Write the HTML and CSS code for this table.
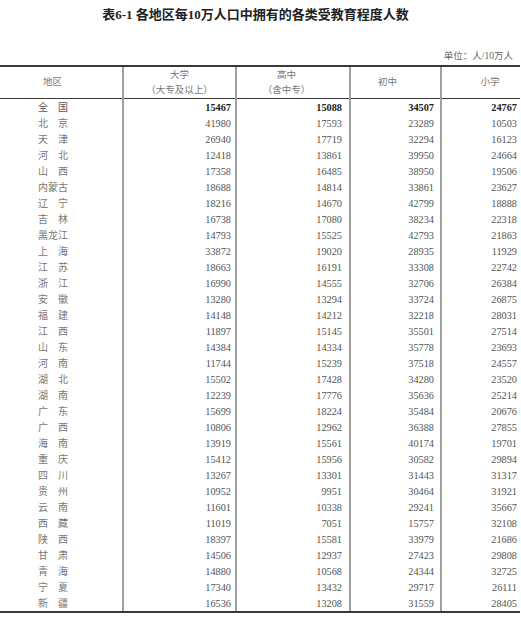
FILE: index.html
```html
<!DOCTYPE html>
<html lang="zh-CN">
<head>
<meta charset="utf-8">
<title>表6-1 各地区每10万人口中拥有的各类受教育程度人数</title>
<link rel="stylesheet" href="styles.css">
</head>
<body>
<div class="page">
  <h1 class="title">表6-1 各地区每10万人口中拥有的各类受教育程度人数</h1>
  <div class="unit">单位：人/10万人</div>
  <table class="stats">
    <colgroup>
      <col class="c0"><col class="c1"><col class="c2"><col class="c3"><col class="c4">
    </colgroup>
    <thead>
      <tr>
        <th class="h0">地区</th>
        <th class="h1">大学<br>（大专及以上）</th>
        <th class="h2">高中<br>（含中专）</th>
        <th class="h3">初中</th>
        <th class="h4">小学</th>
      </tr>
    </thead>
    <tbody id="rows">
      <tr class="total"><td class="name"><span>全国</span></td><td>15467</td><td>15088</td><td>34507</td><td>24767</td></tr>
      <tr><td class="name"><span>北京</span></td><td>41980</td><td>17593</td><td>23289</td><td>10503</td></tr>
      <tr><td class="name"><span>天津</span></td><td>26940</td><td>17719</td><td>32294</td><td>16123</td></tr>
      <tr><td class="name"><span>河北</span></td><td>12418</td><td>13861</td><td>39950</td><td>24664</td></tr>
      <tr><td class="name"><span>山西</span></td><td>17358</td><td>16485</td><td>38950</td><td>19506</td></tr>
      <tr><td class="name"><span>内蒙古</span></td><td>18688</td><td>14814</td><td>33861</td><td>23627</td></tr>
      <tr><td class="name"><span>辽宁</span></td><td>18216</td><td>14670</td><td>42799</td><td>18888</td></tr>
      <tr><td class="name"><span>吉林</span></td><td>16738</td><td>17080</td><td>38234</td><td>22318</td></tr>
      <tr><td class="name"><span>黑龙江</span></td><td>14793</td><td>15525</td><td>42793</td><td>21863</td></tr>
      <tr><td class="name"><span>上海</span></td><td>33872</td><td>19020</td><td>28935</td><td>11929</td></tr>
      <tr><td class="name"><span>江苏</span></td><td>18663</td><td>16191</td><td>33308</td><td>22742</td></tr>
      <tr><td class="name"><span>浙江</span></td><td>16990</td><td>14555</td><td>32706</td><td>26384</td></tr>
      <tr><td class="name"><span>安徽</span></td><td>13280</td><td>13294</td><td>33724</td><td>26875</td></tr>
      <tr><td class="name"><span>福建</span></td><td>14148</td><td>14212</td><td>32218</td><td>28031</td></tr>
      <tr><td class="name"><span>江西</span></td><td>11897</td><td>15145</td><td>35501</td><td>27514</td></tr>
      <tr><td class="name"><span>山东</span></td><td>14384</td><td>14334</td><td>35778</td><td>23693</td></tr>
      <tr><td class="name"><span>河南</span></td><td>11744</td><td>15239</td><td>37518</td><td>24557</td></tr>
      <tr><td class="name"><span>湖北</span></td><td>15502</td><td>17428</td><td>34280</td><td>23520</td></tr>
      <tr><td class="name"><span>湖南</span></td><td>12239</td><td>17776</td><td>35636</td><td>25214</td></tr>
      <tr><td class="name"><span>广东</span></td><td>15699</td><td>18224</td><td>35484</td><td>20676</td></tr>
      <tr><td class="name"><span>广西</span></td><td>10806</td><td>12962</td><td>36388</td><td>27855</td></tr>
      <tr><td class="name"><span>海南</span></td><td>13919</td><td>15561</td><td>40174</td><td>19701</td></tr>
      <tr><td class="name"><span>重庆</span></td><td>15412</td><td>15956</td><td>30582</td><td>29894</td></tr>
      <tr><td class="name"><span>四川</span></td><td>13267</td><td>13301</td><td>31443</td><td>31317</td></tr>
      <tr><td class="name"><span>贵州</span></td><td>10952</td><td>9951</td><td>30464</td><td>31921</td></tr>
      <tr><td class="name"><span>云南</span></td><td>11601</td><td>10338</td><td>29241</td><td>35667</td></tr>
      <tr><td class="name"><span>西藏</span></td><td>11019</td><td>7051</td><td>15757</td><td>32108</td></tr>
      <tr><td class="name"><span>陕西</span></td><td>18397</td><td>15581</td><td>33979</td><td>21686</td></tr>
      <tr><td class="name"><span>甘肃</span></td><td>14506</td><td>12937</td><td>27423</td><td>29808</td></tr>
      <tr><td class="name"><span>青海</span></td><td>14880</td><td>10568</td><td>24344</td><td>32725</td></tr>
      <tr><td class="name"><span>宁夏</span></td><td>17340</td><td>13432</td><td>29717</td><td>26111</td></tr>
      <tr class="last"><td class="name"><span>新疆</span></td><td>16536</td><td>13208</td><td>31559</td><td>28405</td></tr>
    </tbody>
  </table>
</div>
</body>
</html>
```

FILE: styles.css
```css
html, body {
  margin: 0;
  padding: 0;
  background: #ffffff;
}

.page {
  width: 521px;
  font-family: "Liberation Serif", "Noto Sans CJK SC", serif;
  color: #444;
}

.title {
  margin: 0;
  padding-top: 5px;
  height: 20px;
  line-height: 20px;
  font-size: 13px;
  font-weight: bold;
  color: #222;
  text-align: center;
  padding-right: 10px;
}

.unit {
  margin-top: 25px;
  height: 12px;
  line-height: 12px;
  font-size: 9.5px;
  color: #666;
  text-align: right;
  padding-right: 8px;
}

.stats {
  margin-top: 3px;
  width: 520px;
  border-collapse: collapse;
  table-layout: fixed;
}

.c0 { width: 123px; }
.c1 { width: 113px; }
.c2 { width: 114px; }
.c3 { width: 91px; }
.c4 { width: 79px; }

.stats th {
  height: 31px;
  padding: 0;
  font-size: 9.5px;
  font-weight: normal;
  line-height: 15px;
  color: #777;
  text-align: center;
  vertical-align: middle;
  border-top: 2px solid #3a3a3a;
  border-bottom: 1px solid #3a3a3a;
}

.stats th.h0 { text-align: left; padding-left: 43px; }
.stats th.h2 { padding-right: 13px; }
.stats th.h3 { padding-right: 16px; }
.stats th.h4 { padding-left: 18px; }

.stats th + th,
.stats td + td {
  border-left: 2px solid #a0a0a0;
}

.stats td {
  height: 16px;
  padding: 0;
  font-size: 10.3px;
  line-height: 15px;
  color: #555;
  text-align: right;
  vertical-align: middle;
}

.stats tr.last td {
  border-bottom: 2px solid #3a3a3a;
}

.stats td:nth-child(2) { padding-right: 4px; }
.stats td:nth-child(3) { padding-right: 7px; }
.stats td:nth-child(4) { padding-right: 6px; }
.stats td:nth-child(5) { padding-right: 3px; }

.stats td.name {
  text-align: left;
  padding-left: 38px;
  font-size: 10px;
  color: #777;
}

.stats td.name span {
  display: inline-block;
  width: 30px;
  text-align: justify;
  text-align-last: justify;
}

.stats tr.total td {
  font-weight: bold;
  color: #222;
}

.stats tr.total td.name {
  font-weight: normal;
  color: #555;
}
```
